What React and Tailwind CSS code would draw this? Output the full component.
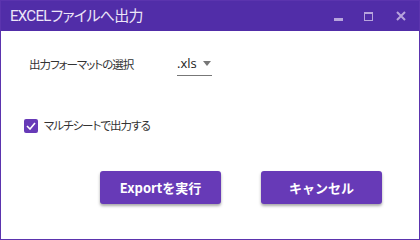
import React from "react";

export default function App() {
  return (
    <div
      className="w-[420px] h-[240px] flex flex-col bg-white border border-[#5b34ae] overflow-hidden"
      style={{ fontFamily: '"Noto Sans CJK JP", "Noto Sans", sans-serif' }}
    >
      {/* Title bar */}
      <div className="h-[30px] shrink-0 bg-[#512da8] flex items-center pl-[9px] text-[#ece6f7]">
        <span
          className="text-[15px] leading-none tracking-[-0.7px] [font-feature-settings:'palt']"
          style={{ fontFamily: 'Roboto, "Noto Sans CJK JP", sans-serif' }}
        >
          EXCELファイルへ出力
        </span>
        <div className="ml-auto flex items-center h-full">
          <div className="w-[30px] h-full flex items-center justify-center">
            <div className="w-[9px] h-[3px] bg-[#b7a4dc] mt-[7px]" />
          </div>
          <div className="w-[30px] h-full flex items-center justify-center">
            <div className="w-[9px] h-[9px] border border-[#b7a4dc] border-t-[2px]" />
          </div>
          <div className="w-[36px] h-full flex items-center justify-center">
            <svg width="10" height="10" viewBox="0 0 10 10">
              <path d="M1 1L9 9M9 1L1 9" stroke="#b7a4dc" strokeWidth="2" />
            </svg>
          </div>
        </div>
      </div>

      {/* Body */}
      <div className="flex-1 flex flex-col">
        <div className="flex items-center mt-[23px] pl-[28px]">
          <span className="text-[11.5px] text-[#333] w-[148px] tracking-[-1px] [font-feature-settings:'palt']">
            出力フォーマットの選択
          </span>
          <div className="w-[35px] border-b border-[#777] flex items-center h-[22px] pb-[2px]">
            <span className="text-[13px] text-[#222]" style={{ fontFamily: '"Open Sans", sans-serif' }}>.xls</span>
            <svg className="ml-auto mr-[1px]" width="8" height="5" viewBox="0 0 8 5">
              <path d="M0 0H8L4 5Z" fill="#777" />
            </svg>
          </div>
        </div>

        <div className="flex items-center mt-[41px] pl-[23px]">
          <div className="w-[14px] h-[14px] rounded-[2px] bg-[#673ab7] flex items-center justify-center">
            <svg width="10" height="8" viewBox="0 0 10 8">
              <path d="M1 4L4 7L9 1" stroke="white" strokeWidth="1.6" fill="none" />
            </svg>
          </div>
          <span className="ml-[6px] text-[11.5px] text-[#333] tracking-[-1px] [font-feature-settings:'palt']">
            マルチシートで出力する
          </span>
        </div>

        <div className="flex mt-[37px] pl-[99px] gap-[40px]">
          <button className="w-[121px] h-[33px] rounded-[3px] bg-[#673ab7] text-white text-[13px] font-bold shadow-[0_2px_3px_rgba(0,0,0,0.35)]">
            Exportを実行
          </button>
          <button className="w-[121px] h-[33px] rounded-[3px] bg-[#673ab7] text-white text-[13px] font-bold shadow-[0_2px_3px_rgba(0,0,0,0.35)]">
            キャンセル
          </button>
        </div>
      </div>
    </div>
  );
}
